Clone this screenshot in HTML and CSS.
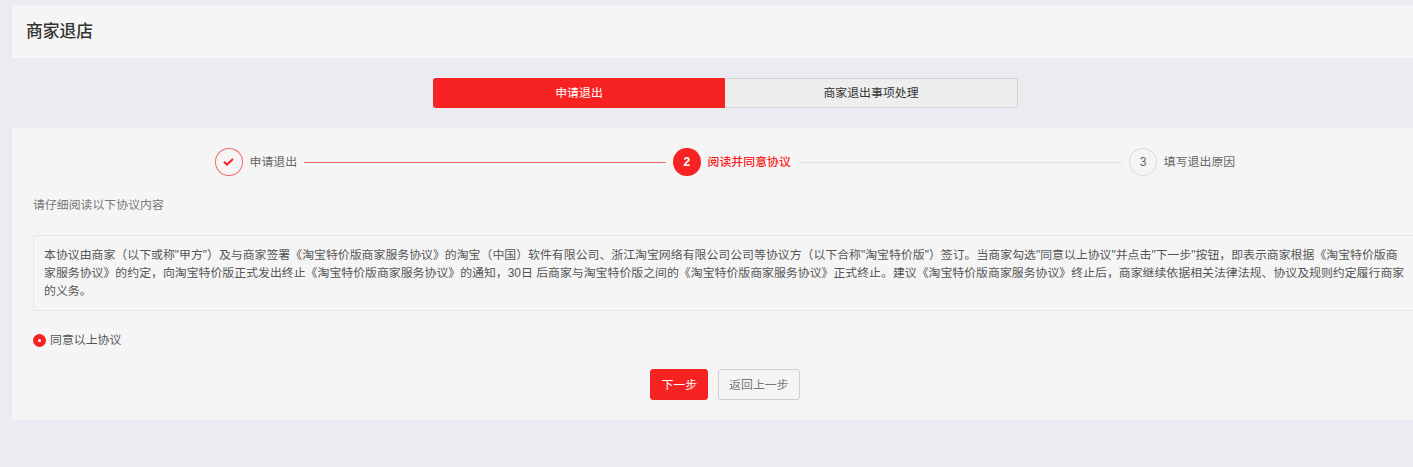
FILE: index.html
```html
<!DOCTYPE html>
<html lang="zh-CN">
<head>
  <meta charset="UTF-8">
  <title>商家退店</title>
  <link rel="stylesheet" href="styles.css">
</head>
<body>

<div class="page-title">商家退店</div>

<div class="tabs">
  <div class="tab tab-active">申请退出</div>
  <div class="tab">商家退出事项处理</div>
</div>

<div class="panel">
  <div class="steps">
    <div class="step step-done">
      <span class="step-icon">
        <svg width="11" height="8" viewBox="0 0 11 8"><path d="M1 3.8 L4 6.6 L10 1" fill="none" stroke="#f72222" stroke-width="2"/></svg>
      </span>
      <span class="step-label">申请退出</span>
    </div>
    <div class="step-line line-done"></div>
    <div class="step step-current">
      <span class="step-icon">2</span>
      <span class="step-label">阅读并同意协议</span>
    </div>
    <div class="step-line"></div>
    <div class="step step-todo">
      <span class="step-icon">3</span>
      <span class="step-label">填写退出原因</span>
    </div>
  </div>

  <p class="hint">请仔细阅读以下协议内容</p>

  <div class="agreement">本协议由商家（以下或称"甲方"）及与商家签署《淘宝特价版商家服务协议》的淘宝（中国）软件有限公司、浙江淘宝网络有限公司公司等协议方（以下合称"淘宝特价版"）签订。当商家勾选"同意以上协议"并点击"下一步"按钮，即表示商家根据《淘宝特价版商家服务协议》的约定，向淘宝特价版正式发出终止《淘宝特价版商家服务协议》的通知，30日 后商家与淘宝特价版之间的《淘宝特价版商家服务协议》正式终止。建议《淘宝特价版商家服务协议》终止后，商家继续依据相关法律法规、协议及规则约定履行商家的义务。</div>

  <label class="agree">
    <span class="radio"></span>
    同意以上协议
  </label>

  <div class="actions">
    <button class="btn btn-primary">下一步</button>
    <button class="btn">返回上一步</button>
  </div>
</div>

</body>
</html>
```

FILE: styles.css
```css
* {
  box-sizing: border-box;
}
html, body {
  overflow: hidden;
}
body {
  margin: 0;
  height: 467px;
  padding: 5px 0 0 12px;
  background: #ebecf1;
  font-family: "Liberation Sans", "Noto Sans CJK SC", sans-serif;
  font-size: 11.9px;
  color: #666;
}
.page-title {
  height: 53px;
  padding-left: 14px;
  background: #f5f5f5;
  font-size: 16.8px;
  font-weight: 500;
  line-height: 54px;
  color: #333;
}
.tabs {
  display: flex;
  width: 585px;
  height: 30px;
  margin: 20px 0 20px 421px;
}
.tab {
  flex: 1;
  border: 1px solid #d5d5d8;
  border-left: none;
  border-radius: 0 3px 3px 0;
  background: #eeeeee;
  color: #333;
  text-align: center;
  line-height: 28px;
}
.tab-active {
  flex: 0 0 292px;
  border: none;
  border-radius: 3px 0 0 3px;
  background: #f72222;
  color: #fff;
  line-height: 30px;
}
.panel {
  height: 292px;
  padding: 20px 0 0 21px;
  background: #f5f5f5;
}
.steps {
  display: flex;
  align-items: center;
  height: 28px;
  padding-left: 182px;
  margin-bottom: 23px;
}
.step {
  display: flex;
  align-items: center;
  gap: 7px;
}
.step-icon {
  display: flex;
  justify-content: center;
  align-items: center;
  width: 27.5px;
  height: 28px;
  border-radius: 50%;
  font-size: 12px;
}
.step-label {
  margin-bottom: 3px;
}
.step-done .step-icon {
  border: 1px solid #f06a6a;
}
.step-current .step-icon {
  background: #f72222;
  color: #fff;
  font-weight: 700;
}
.step-current .step-label {
  color: #f72222;
  font-weight: 500;
}
.step-todo .step-icon {
  border: 1px solid #dcdcdc;
  font-weight: 400;
}
.step-line {
  flex: none;
  width: 324.5px;
  height: 1px;
  margin: 0 7px;
  background: #e0e0e0;
}
.line-done {
  width: 362px;
  background: #f06a6a;
}
.hint {
  margin: 0 0 24px;
  line-height: 12px;
  color: #777;
}
.agreement {
  width: 1400px;
  height: 76px;
  padding: 10px 24px 0 10px;
  border: 1px solid #e6e6e6;
  line-height: 18px;
  color: #555;
}
.agree {
  display: flex;
  align-items: center;
  gap: 4px;
  margin-top: 21px;
  line-height: 16px;
  color: #555;
}
.radio {
  width: 13px;
  height: 13px;
  border-radius: 50%;
  border: 5px solid #f72222;
  background: #fff;
}
.actions {
  display: flex;
  justify-content: center;
  gap: 10px;
  width: 1400px;
  margin: 21px 0 0 -21px;
  padding-left: 26px;
}
.btn {
  height: 31px;
  padding: 0 10px 2px;
  border: 1px solid #d0d0d0;
  border-radius: 3px;
  background: transparent;
  font: inherit;
  color: #777;
}
.btn-primary {
  border-color: #f72222;
  background: #f72222;
  color: #fff;
}
```
